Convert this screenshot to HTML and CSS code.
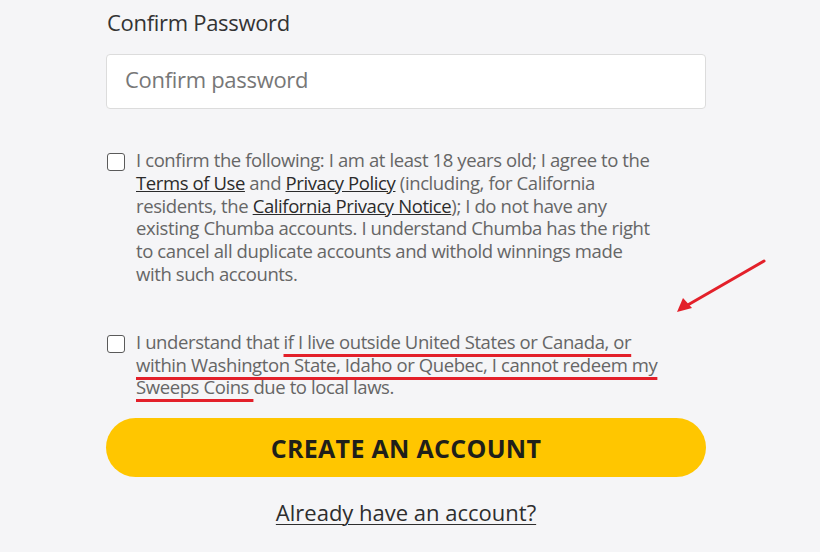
FILE: index.html
```html
<!DOCTYPE html>
<html>
<head>
<meta charset="utf-8">
<link rel="stylesheet" href="styles.css">
</head>
<body>
<div class="page">
  <form class="form">
    <label class="label">Confirm Password</label>
    <input class="input" type="password" placeholder="Confirm password">
    <div class="check first">
      <span class="box"></span>
      <p class="text">I confirm the following: I am at least 18 years old; I agree to the <a href="#">Terms of Use</a> and <a href="#">Privacy Policy</a> (including, for California residents, the <a href="#">California Privacy Notice</a>); I do not have any existing Chumba accounts. I understand Chumba has the right to cancel all duplicate accounts and withold winnings made with such accounts.</p>
    </div>
    <div class="check second">
      <span class="box"></span>
      <p class="text">I understand that <span class="mark">if I live outside United States or Canada, or within Washington State, Idaho or Quebec, I cannot redeem my Sweeps Coins </span>due to local laws.</p>
    </div>
    <button class="btn" type="button">CREATE AN ACCOUNT</button>
    <div class="login"><a href="#">Already have an account?</a></div>
  </form>
  <svg class="arrow" width="100" height="60" viewBox="0 0 100 60">
    <line x1="92" y1="5" x2="14" y2="50" stroke="#e3202a" stroke-width="3" stroke-linecap="round"/>
    <path d="M5 56 L11 42 L20 52 Z" fill="#e3202a"/>
  </svg>
</div>
</body>
</html>
```
FILE: styles.css
```css
html, body {
  margin: 0;
  padding: 0;
  background: #f5f5f7;
}
.page {
  position: relative;
  width: 820px;
  height: 552px;
  overflow: hidden;
  font-family: "Open Sans", "Noto Sans", sans-serif;
}
.form {
  width: 600px;
  margin-left: 106px;
  padding-top: 7px;
  display: flex;
  flex-direction: column;
}
.label {
  font-size: 22px;
  line-height: 30px;
  color: #333;
  letter-spacing: -0.3px;
  padding-left: 1px;
}
.input {
  margin-top: 17px;
  height: 55px;
  box-sizing: border-box;
  border: 1px solid #dcdcdc;
  border-radius: 4px;
  background: #fff;
  padding: 0 18px 5px;
  font-family: inherit;
  font-size: 22px;
  letter-spacing: -0.3px;
  outline: none;
}
.input::placeholder {
  color: #777;
}
.check {
  display: flex;
  gap: 11px;
  padding-left: 1px;
}
.check.first { margin-top: 40px; }
.check.second { margin-top: 45px; }
.box {
  flex: none;
  box-sizing: border-box;
  width: 18px;
  height: 18px;
  margin-top: 4px;
  border: 1.5px solid #5a5a5a;
  border-radius: 3px;
  background: #fff;
}
.text {
  margin: 0;
  width: 522px;
  font-size: 18.5px;
  line-height: 22.8px;
  color: #666;
  letter-spacing: -0.4px;
}
.text a {
  color: #2b2b2b;
  text-decoration: underline;
}
.mark {
  text-decoration: underline;
  text-decoration-color: #e3202a;
  text-decoration-thickness: 3px;
  text-underline-offset: 5px;
}
.btn {
  margin-top: 19px;
  height: 59px;
  border: none;
  border-radius: 30px;
  background: #ffc600;
  color: #1f1f1a;
  font-family: inherit;
  font-weight: 700;
  font-size: 25px;
  letter-spacing: 0.3px;
}
.login {
  margin-top: 20px;
  text-align: center;
}
.login a {
  font-size: 22px;
  color: #2e2e2e;
  text-decoration: underline;
  text-decoration-thickness: 1px;
  text-underline-offset: 3px;
}
.arrow {
  position: absolute;
  left: 672px;
  top: 256px;
}
```
